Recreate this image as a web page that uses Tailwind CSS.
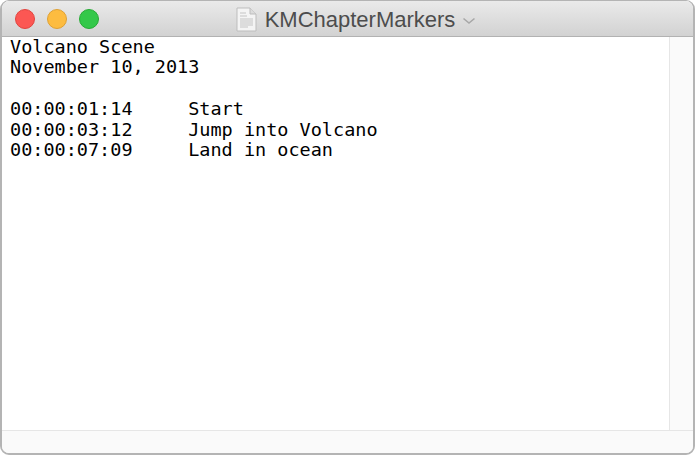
<!DOCTYPE html>
<html lang="en">
<head>
  <meta charset="UTF-8">
  <title>KMChapterMarkers</title>
  <script src="https://cdn.jsdelivr.net/npm/@tailwindcss/browser@4"></script>
</head>
<body class="bg-white w-[698px] h-[456px] overflow-hidden">
  <div class="w-[695px] h-[455px] flex flex-col border-2 border-t border-[#b4b4b4] rounded-t-[9px] rounded-b-[9px] overflow-hidden bg-white">
    <!-- Title bar -->
    <div class="relative h-[36px] shrink-0 flex items-center justify-center bg-gradient-to-b from-[#eaeaea] to-[#d2d2d2] border-b border-[#b2b2b2]">
      <div class="absolute left-[13px] top-[8px] flex gap-[12px]">
        <span class="w-5 h-5 rounded-full bg-[#fc5753] border border-[#e0443e]"></span>
        <span class="w-5 h-5 rounded-full bg-[#fdbc40] border border-[#dea034]"></span>
        <span class="w-5 h-5 rounded-full bg-[#34c84a] border border-[#27aa35]"></span>
      </div>
      <div class="flex items-center ml-[17px] mt-[2px]">
        <svg width="21" height="25" viewBox="0 0 21 25" class="mr-[8px]">
          <path d="M1 1H14L20 7V24H1Z" fill="#f4f4f4" stroke="#bdbdbd"/>
          <path d="M14 1V7H20" fill="#dcdcdc" stroke="#bdbdbd"/>
          <path d="M4 6H10M4 9H11M4 12H17M4 14H17M4 16H17M4 18H17M4 20H12" stroke="#c4c4c4"/>
        </svg>
        <span class="font-['Liberation_Sans',sans-serif] text-[22px] leading-none text-[#4d4d4d]">KMChapterMarkers</span>
        <svg width="14" height="8" viewBox="0 0 14 8" class="ml-[7px] mt-[2px]">
          <path d="M1.5 1.5L7 6L12.5 1.5" fill="none" stroke="#a8a8a8" stroke-width="1.6"/>
        </svg>
      </div>
    </div>
    <!-- Text area and scroller -->
    <div class="flex flex-1 min-h-0">
      <pre class="flex-1 pl-[8px] -mt-[0.5px] bg-white font-['DejaVu_Sans_Mono',monospace] text-[18.5px] leading-[20.8px] text-black">Volcano Scene
November 10, 2013

00:00:01:14     Start
00:00:03:12     Jump into Volcano
00:00:07:09     Land in ocean</pre>
      <div class="w-[24px] shrink-0 bg-[#fafafa] border-l border-[#e6e6e6]"></div>
    </div>
    <div class="h-[23px] shrink-0 bg-[#fafafa] border-t border-[#e6e6e6]"></div>
  </div>
</body>
</html>
